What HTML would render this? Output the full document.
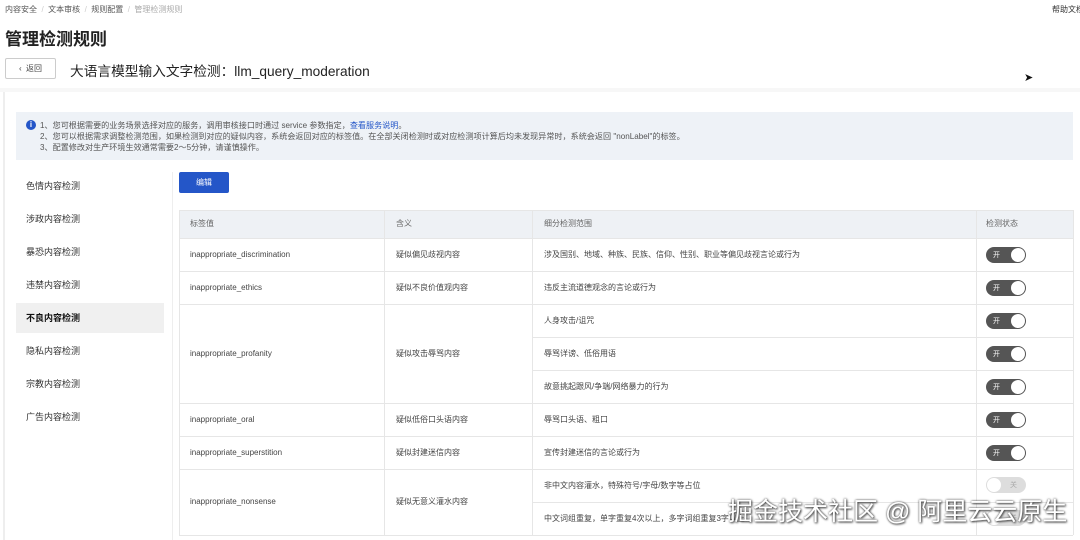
<!DOCTYPE html>
<html><head><meta charset="utf-8"><style>
*{margin:0;padding:0;box-sizing:border-box}
body{width:1080px;height:540px;overflow:hidden;background:#fff;font-family:"Liberation Sans","Noto Sans CJK SC",sans-serif;color:#333;position:relative}
.a{position:absolute;white-space:nowrap}
.t{font-size:8px;color:#444;line-height:10px}
.tg{position:absolute;width:40px;height:16px;border-radius:8px;background:#555}
.tg::after{content:"";position:absolute;right:1px;top:1px;width:14px;height:14px;border-radius:50%;background:#fff}
.tg span{position:absolute;left:7px;top:3px;font-size:7px;color:#fff}
.off{background:#ddd}.off::after{left:1px;right:auto}
.off span{left:24px;color:#aaa}
.hl{position:absolute;height:1px;background:#e6e6e6}
.vl{position:absolute;width:1px;background:#e6e6e6}
</style></head><body>
<div class="a" style="left:5px;top:4px;font-size:8px;color:#555">内容安全 <span style="color:#ccc">&nbsp;/&nbsp;</span> 文本审核 <span style="color:#ccc">&nbsp;/&nbsp;</span> 规则配置 <span style="color:#ccc">&nbsp;/&nbsp;</span> <span style="color:#aaa">管理检测规则</span></div>
<div class="a" style="left:1052px;top:4px;font-size:8px;color:#333">帮助文档</div>
<div class="a" style="left:5px;top:25px;font-size:17px;font-weight:bold;color:#222">管理检测规则</div>
<div class="a" style="left:5px;top:58px;width:51px;height:21px;border:1px solid #ccc;border-radius:2px;font-size:8px;line-height:19px;text-align:center;color:#444">‹&nbsp; 返回</div>
<div class="a" style="left:70px;top:60px;font-size:13.7px;color:#222">大语言模型输入文字检测：llm_query_moderation</div>
<div class="a" style="left:0;top:88px;width:1080px;height:4px;background:#f7f7f7"></div>
<div class="a" style="left:3px;top:92px;width:2px;height:448px;background:#eee"></div>
<div class="a" style="left:16px;top:112px;width:1057px;height:48px;background:#eef2f7"></div>
<div class="a" style="left:26px;top:120px;width:10px;height:10px;border-radius:50%;background:#2456c8;color:#fff;font-size:8px;line-height:10px;text-align:center;font-weight:bold">i</div>
<div class="a" style="left:40px;top:120px;font-size:8.1px;color:#555;line-height:11px">1、您可根据需要的业务场景选择对应的服务，调用审核接口时通过 service 参数指定，<span style="color:#2456c8">查看服务说明</span>。<br>2、您可以根据需求调整检测范围，如果检测到对应的疑似内容，系统会返回对应的标签值。在全部关闭检测时或对应检测项计算后均未发现异常时，系统会返回 "nonLabel"的标签。<br>3、配置修改对生产环境生效通常需要2～5分钟，请谨慎操作。</div>
<div class="a" style="left:16px;top:303px;width:148px;height:30px;background:#f0f0f0"></div>
<div class="a" style="left:26px;top:170px;font-size:9px;line-height:33px;color:#333">色情内容检测<br>涉政内容检测<br>暴恐内容检测<br>违禁内容检测<br><b style="color:#111">不良内容检测</b><br>隐私内容检测<br>宗教内容检测<br>广告内容检测</div>
<div class="a" style="left:172px;top:172px;width:1px;height:368px;background:#eee"></div>
<div class="a" style="left:179px;top:172px;width:50px;height:21px;background:#2456c8;border-radius:2px;color:#fff;font-size:8px;line-height:21px;text-align:center">编辑</div>
<div class="a" style="left:179px;top:210px;width:894px;height:28px;background:#eef1f5"></div>
<div class="hl" style="left:179px;top:210px;width:894px"></div>
<div class="hl" style="left:179px;top:238px;width:894px"></div>
<div class="hl" style="left:179px;top:271px;width:894px"></div>
<div class="hl" style="left:179px;top:304px;width:894px"></div>
<div class="hl" style="left:532px;top:337px;width:541px"></div>
<div class="hl" style="left:532px;top:370px;width:541px"></div>
<div class="hl" style="left:179px;top:403px;width:894px"></div>
<div class="hl" style="left:179px;top:436px;width:894px"></div>
<div class="hl" style="left:179px;top:469px;width:894px"></div>
<div class="hl" style="left:532px;top:502px;width:541px"></div>
<div class="hl" style="left:179px;top:535px;width:894px"></div>
<div class="vl" style="left:179px;top:210px;height:325px"></div>
<div class="vl" style="left:384px;top:210px;height:325px"></div>
<div class="vl" style="left:532px;top:210px;height:325px"></div>
<div class="vl" style="left:976px;top:210px;height:325px"></div>
<div class="vl" style="left:1073px;top:210px;height:325px"></div>
<div class="a t" style="left:190px;top:219px;color:#666">标签值</div>
<div class="a t" style="left:396px;top:219px;color:#666">含义</div>
<div class="a t" style="left:544px;top:219px;color:#666">细分检测范围</div>
<div class="a t" style="left:986px;top:219px;color:#666">检测状态</div>
<div class="a t" style="left:190px;top:250px">inappropriate_discrimination</div><div class="a t" style="left:396px;top:250px">疑似偏见歧视内容</div><div class="a t" style="left:544px;top:250px">涉及国别、地域、种族、民族、信仰、性别、职业等偏见歧视言论或行为</div>
<div class="a t" style="left:190px;top:283px">inappropriate_ethics</div><div class="a t" style="left:396px;top:283px">疑似不良价值观内容</div><div class="a t" style="left:544px;top:283px">违反主流道德观念的言论或行为</div>
<div class="a t" style="left:190px;top:349px">inappropriate_profanity</div><div class="a t" style="left:396px;top:349px">疑似攻击辱骂内容</div>
<div class="a t" style="left:544px;top:316px">人身攻击/诅咒</div><div class="a t" style="left:544px;top:349px">辱骂详谤、低俗用语</div><div class="a t" style="left:544px;top:382px">故意挑起跟风/争端/网络暴力的行为</div>
<div class="a t" style="left:190px;top:415px">inappropriate_oral</div><div class="a t" style="left:396px;top:415px">疑似低俗口头语内容</div><div class="a t" style="left:544px;top:415px">辱骂口头语、粗口</div>
<div class="a t" style="left:190px;top:448px">inappropriate_superstition</div><div class="a t" style="left:396px;top:448px">疑似封建迷信内容</div><div class="a t" style="left:544px;top:448px">宣传封建迷信的言论或行为</div>
<div class="a t" style="left:190px;top:497px">inappropriate_nonsense</div><div class="a t" style="left:396px;top:497px">疑似无意义灌水内容</div>
<div class="a t" style="left:544px;top:481px">非中文内容灌水，特殊符号/字母/数字等占位</div><div class="a t" style="left:544px;top:514px">中文词组重复，单字重复4次以上，多字词组重复3字以上</div>
<div class="tg" style="left:986px;top:247px"><span>开</span></div>
<div class="tg" style="left:986px;top:280px"><span>开</span></div>
<div class="tg" style="left:986px;top:313px"><span>开</span></div>
<div class="tg" style="left:986px;top:346px"><span>开</span></div>
<div class="tg" style="left:986px;top:379px"><span>开</span></div>
<div class="tg" style="left:986px;top:412px"><span>开</span></div>
<div class="tg" style="left:986px;top:445px"><span>开</span></div>
<div class="tg off" style="left:986px;top:477px"><span>关</span></div>
<div class="tg off" style="left:986px;top:510px"><span>关</span></div>
<div class="a" style="left:728px;top:492px;font-size:25px;color:#fff;text-shadow:0 0 2px #444,1px 1px 2px #444">掘金技术社区 @ 阿里云云原生</div>
<div class="a" style="left:1024px;top:71px;font-size:11px;color:#111">➤</div>
</body></html>
